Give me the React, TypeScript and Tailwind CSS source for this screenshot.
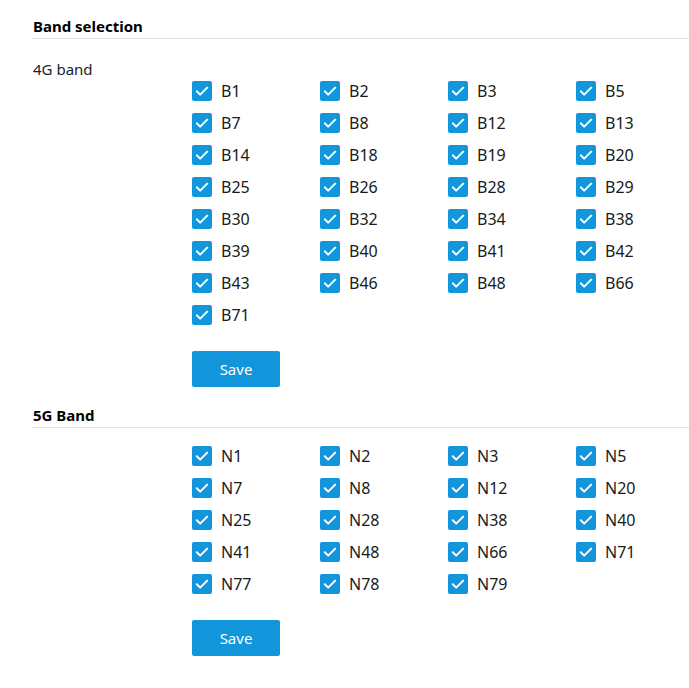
import React, { useState } from "react";

const bands4g = [
  "B1", "B2", "B3", "B5", "B7", "B8", "B12", "B13", "B14", "B18", "B19", "B20",
  "B25", "B26", "B28", "B29", "B30", "B32", "B34", "B38", "B39", "B40", "B41",
  "B42", "B43", "B46", "B48", "B66", "B71",
];

const bands5g = [
  "N1", "N2", "N3", "N5", "N7", "N8", "N12", "N20", "N25", "N28", "N38", "N40",
  "N41", "N48", "N66", "N71", "N77", "N78", "N79",
];

const Check = ({ label }: { label: string }) => {
  const [on, setOn] = useState(true);
  return (
    <label className="flex items-center h-[32px] cursor-pointer select-none">
      <span
        onClick={() => setOn(!on)}
        className={`w-[20px] h-[20px] rounded-[2px] flex items-center justify-center ${
          on ? "bg-[#1296db]" : "bg-white border border-gray-300"
        }`}
      >
        {on && (
          <svg width="20" height="20" viewBox="0 0 20 20" fill="none">
            <path d="M4.8 10.2l3.4 3.4 7-7" stroke="#fff" strokeWidth="2" strokeLinecap="round" strokeLinejoin="round" />
          </svg>
        )}
      </span>
      <span className="ml-[9px] text-[16px] text-[#1a1a1a]">{label}</span>
    </label>
  );
};

const Section = ({ title, sub, items }: { title: string; sub?: string; items: string[] }) => (
  <div>
    <div className="text-[15px] font-bold text-black leading-[20px] pb-[2px] border-b border-[#e3e3e3] pl-px">
      {title}
    </div>
    {sub ? (
      <div className="text-[15px] text-[#1c1c2c] leading-[20px] h-[16px] mt-[20px] pl-px">{sub}</div>
    ) : (
      <div className="h-[12px]" />
    )}
    <div className="pl-[160px]">
      <div className="grid grid-cols-4 w-[512px]">
        {items.map((b) => (
          <Check key={b} label={b} />
        ))}
      </div>
      <button className="mt-[20px] w-[88px] h-[36px] rounded-[2px] bg-[#1296db] text-white text-[15px]">
        Save
      </button>
    </div>
  </div>
);

export default function App() {
  return (
    <div className="min-h-[688px] bg-white pt-[16px] pl-[32px] font-['Noto_Sans',sans-serif]">
      <Section title="Band selection" sub="4G band" items={bands4g} />
      <div className="h-[18px]" />
      <Section title="5G Band" items={bands5g} />
    </div>
  );
}
